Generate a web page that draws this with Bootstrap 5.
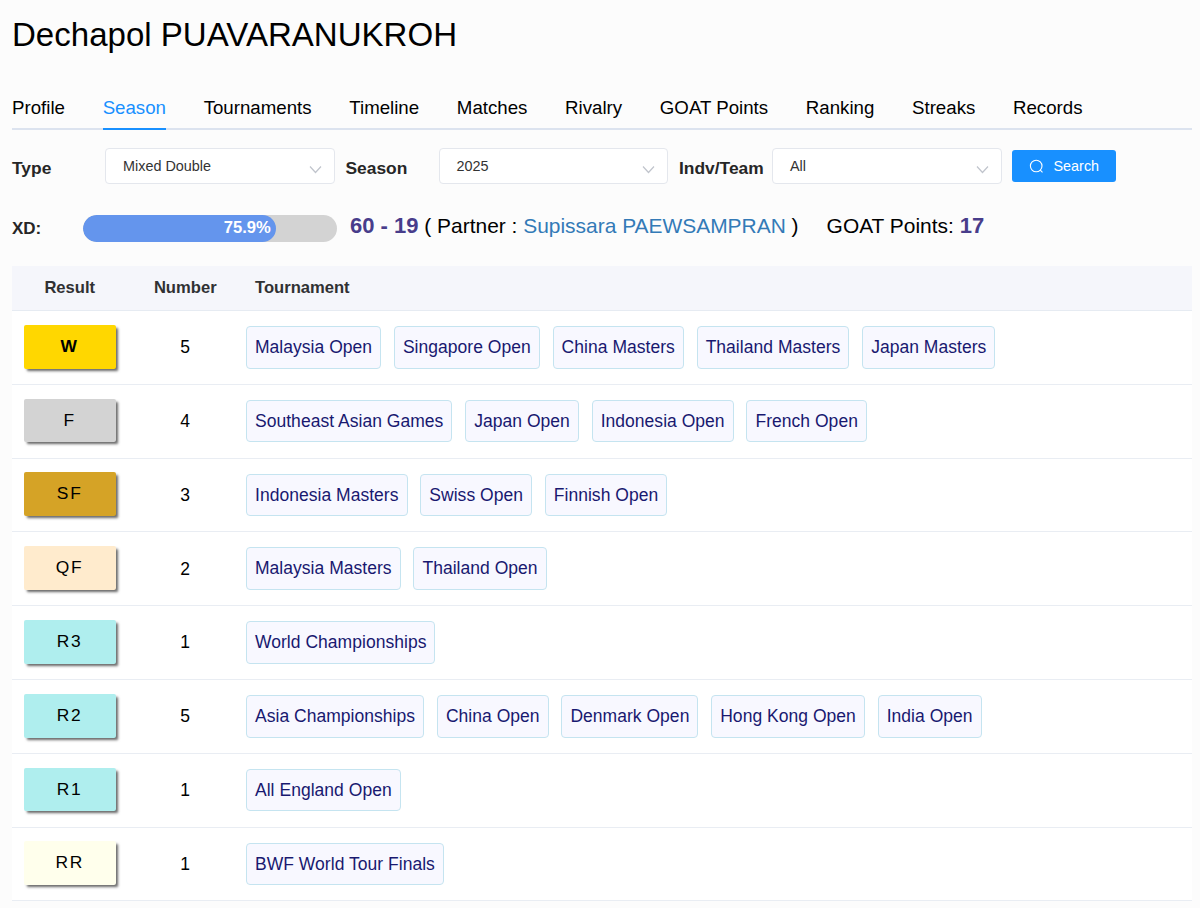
<!DOCTYPE html>
<html lang="en">
<head>
<meta charset="utf-8">
<meta name="viewport" content="width=device-width, initial-scale=1">
<title>Dechapol PUAVARANUKROH - Season</title>
<link rel="stylesheet" href="https://cdn.jsdelivr.net/npm/bootstrap@5.3.0/dist/css/bootstrap.min.css">
<style>
body{background:#fcfcfc;color:#000;font-family:"Liberation Sans",Arial,sans-serif;overflow:hidden}
.page{padding:0 8px 0 12px}
.player{font-size:33.05px;line-height:40px;padding-top:15px;height:87px;margin:0;font-weight:400}
.tabs{height:43px;border-bottom:2px solid #dce3ef;gap:37.7px;font-size:18.68px}
.tabs .nav-link{padding:0;line-height:42px;height:43px;color:#000;white-space:nowrap}
.tabs .nav-link.active{color:#1890ff;border-bottom:2px solid #1890ff}
.filters{height:70px;padding-top:18px}
.flabel{font-size:17.4px;font-weight:700;color:#262626;line-height:20px;margin-top:10px;white-space:nowrap}
.picker{width:229.5px;height:36px;background:#fff;border:1px solid #e4e7ed;border-radius:4px;padding:0 12px 0 17px;font-size:14.4px;color:#333}
.picker span{line-height:35px}
.picker svg{margin-top:14px}
.search{width:104px;height:32px;margin:2px 0 0 10.8px;background:#1890ff;color:#fff;font-size:14.4px;border-radius:3px;padding:0;gap:9px;border:0}
.search:hover{background:#1890ff;color:#fff}
.search span{padding-top:2px}
.stats{height:66px;font-size:20.95px}
.rate{width:254px;height:27px;border-radius:14px;background:#d3d3d3;margin-top:15px}
.rate .progress-bar{background:#6495ed;border-radius:14px;text-align:right;padding-right:5px;font-size:16.6px;font-weight:700;line-height:26px;display:block}
.score{color:#483d8b;font-size:22px;font-weight:700}
.stats a{color:#337ab7;text-decoration:none}
.line{line-height:30px;margin-top:11px;white-space:pre}
.results{font-size:17.5px;letter-spacing:.03px}
.head{height:45px;background:#f5f6fb;border-bottom:1px solid #e6ebf2;font-size:16.6px;letter-spacing:0;font-weight:700;color:#303133}
.entry{height:73.8px;background:#fff;border-bottom:1px solid #e9edf3}
.c1{width:115.5px}
.c2{width:115.5px}
.c3{gap:12.8px;padding-left:3px}
.round{width:92.3px;height:43.8px;margin:-1.4px 0 0 12px;border-radius:2px;box-shadow:2.8px 2.8px 2.8px -1px rgba(0,0,0,.6);line-height:43.5px;font-size:17.4px;text-align:center;letter-spacing:1.7px;padding-right:1px}
.chip{height:42.6px;padding:0 8px;border:1px solid #c5e4f0;border-radius:4px;background:#f8f8ff;color:#191970;line-height:41px;text-decoration:none;white-space:nowrap}
.gold{background:#ffd700;font-weight:700}.silver{background:#d3d3d3}.bronze{background:#d5a326}.almond{background:#ffebcd}.turq{background:#afeeee}.ivory{background:#ffffec}
</style>
</head>
<body>
<main class="page">
<h1 class="player">Dechapol PUAVARANUKROH</h1>
<nav class="tabs nav flex-nowrap">
<a class="nav-link" href="#">Profile</a><a class="nav-link active" href="#">Season</a><a class="nav-link" href="#">Tournaments</a><a class="nav-link" href="#">Timeline</a><a class="nav-link" href="#">Matches</a><a class="nav-link" href="#">Rivalry</a><a class="nav-link" href="#">GOAT Points</a><a class="nav-link" href="#">Ranking</a><a class="nav-link" href="#">Streaks</a><a class="nav-link" href="#">Records</a>
</nav>
<div class="filters d-flex align-items-start">
<div class="flabel" style="width:93px">Type</div>
<div class="picker d-flex justify-content-between"><span>Mixed Double</span><svg width="13" height="13" viewBox="0 0 13 13" fill="none" stroke="#c0c4cc" stroke-width="1.2"><path d="M1 3.5l5.5 6 5.5-6"/></svg></div>
<div class="flabel" style="width:104px;padding-left:11px">Season</div>
<div class="picker d-flex justify-content-between"><span>2025</span><svg width="13" height="13" viewBox="0 0 13 13" fill="none" stroke="#c0c4cc" stroke-width="1.2"><path d="M1 3.5l5.5 6 5.5-6"/></svg></div>
<div class="flabel" style="width:104px;padding-left:11px">Indv/Team</div>
<div class="picker d-flex justify-content-between"><span>All</span><svg width="13" height="13" viewBox="0 0 13 13" fill="none" stroke="#c0c4cc" stroke-width="1.2"><path d="M1 3.5l5.5 6 5.5-6"/></svg></div>
<button class="search btn d-flex align-items-center justify-content-center"><svg width="15" height="15" viewBox="0 0 15 15" fill="none" stroke="#fff" stroke-width="1.1"><circle cx="7.2" cy="7" r="5.8"/><path d="M11.3 11.1l2.2 2.2"/></svg><span>Search</span></button>
</div>
<div class="stats d-flex align-items-start">
<div class="flabel" style="width:71px;margin-top:19px;font-size:17px">XD:</div>
<div class="rate progress"><div class="progress-bar" style="width:75.9%">75.9%</div></div>
<div class="line" style="margin-left:13px"><span class="score">60 - 19</span> ( Partner : <a href="#">Supissara PAEWSAMPRAN</a> )</div>
<div class="line" style="margin-left:28px">GOAT Points: <span class="score">17</span></div>
</div>
<section class="results">
<div class="head d-flex align-items-center"><div class="c1 text-center">Result</div><div class="c2 text-center">Number</div><div style="padding-left:12px">Tournament</div></div>
<div id="entries"></div>
</section>
</main>
<script src="https://cdn.jsdelivr.net/npm/bootstrap@5.3.0/dist/js/bootstrap.bundle.min.js"></script>
<script>
const results=[
["W","gold",5,["Malaysia Open","Singapore Open","China Masters","Thailand Masters","Japan Masters"]],
["F","silver",4,["Southeast Asian Games","Japan Open","Indonesia Open","French Open"]],
["SF","bronze",3,["Indonesia Masters","Swiss Open","Finnish Open"]],
["QF","almond",2,["Malaysia Masters","Thailand Open"]],
["R3","turq",1,["World Championships"]],
["R2","turq",5,["Asia Championships","China Open","Denmark Open","Hong Kong Open","India Open"]],
["R1","turq",1,["All England Open"]],
["RR","ivory",1,["BWF World Tour Finals"]]];
document.getElementById("entries").innerHTML=results.map(([r,c,n,t])=>`<div class="entry d-flex align-items-center"><div class="c1"><div class="round ${c}">${r}</div></div><div class="c2 text-center">${n}</div><div class="c3 d-flex">${t.map(x=>`<a class="chip" href="#">${x}</a>`).join("")}</div></div>`).join("");
</script>
</body>
</html>
